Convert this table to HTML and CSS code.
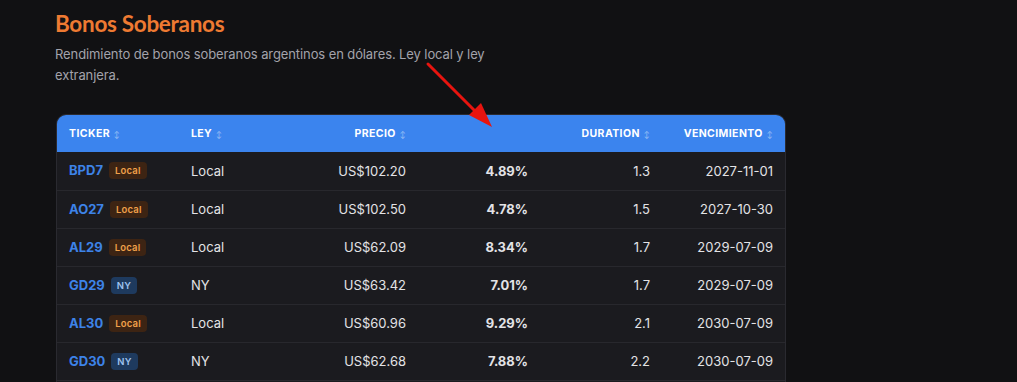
FILE: index.html
```html
<!DOCTYPE html>
<html lang="es">
<head>
<meta charset="utf-8">
<title>Bonos Soberanos</title>
<link rel="stylesheet" href="styles.css">
</head>
<body>
<main class="page">
  <header class="intro">
    <h1 class="title">Bonos Soberanos</h1>
    <p class="subtitle">Rendimiento de bonos soberanos argentinos en dólares. Ley local y ley extranjera.</p>
  </header>
  <div class="table-card">
    <table class="bonds">
      <colgroup>
        <col class="c1"><col class="c2"><col class="c3"><col class="c4"><col class="c5"><col class="c6">
      </colgroup>
      <thead>
        <tr>
          <th class="left">Ticker <span class="sort">↕</span></th>
          <th class="left">Ley <span class="sort">↕</span></th>
          <th class="right">Precio <span class="sort">↕</span></th>
          <th class="right"></th>
          <th class="right">Duration <span class="sort">↕</span></th>
          <th class="right">Vencimiento <span class="sort">↕</span></th>
        </tr>
      </thead>
      <tbody>
        <tr>
          <td><span class="ticker">BPD7</span><span class="badge local">Local</span></td>
          <td>Local</td><td class="right">US$102.20</td><td class="right yield">4.89%</td><td class="right">1.3</td><td class="right">2027-11-01</td>
        </tr>
        <tr>
          <td><span class="ticker">AO27</span><span class="badge local">Local</span></td>
          <td>Local</td><td class="right">US$102.50</td><td class="right yield">4.78%</td><td class="right">1.5</td><td class="right">2027-10-30</td>
        </tr>
        <tr>
          <td><span class="ticker">AL29</span><span class="badge local">Local</span></td>
          <td>Local</td><td class="right">US$62.09</td><td class="right yield">8.34%</td><td class="right">1.7</td><td class="right">2029-07-09</td>
        </tr>
        <tr>
          <td><span class="ticker">GD29</span><span class="badge ny">NY</span></td>
          <td>NY</td><td class="right">US$63.42</td><td class="right yield">7.01%</td><td class="right">1.7</td><td class="right">2029-07-09</td>
        </tr>
        <tr>
          <td><span class="ticker">AL30</span><span class="badge local">Local</span></td>
          <td>Local</td><td class="right">US$60.96</td><td class="right yield">9.29%</td><td class="right">2.1</td><td class="right">2030-07-09</td>
        </tr>
        <tr>
          <td><span class="ticker">GD30</span><span class="badge ny">NY</span></td>
          <td>NY</td><td class="right">US$62.68</td><td class="right yield">7.88%</td><td class="right">2.2</td><td class="right">2030-07-09</td>
        </tr>
      </tbody>
    </table>
  </div>
</main>
<svg class="annotation" width="1017" height="382" viewBox="0 0 1017 382" aria-hidden="true">
  <line x1="428" y1="64" x2="478" y2="114" stroke="#e8140f" stroke-width="3" stroke-linecap="round"/>
  <polygon points="492,127 469,115 481,103" fill="#e8140f"/>
</svg>
</body>
</html>
```

FILE: styles.css
```css
* { box-sizing: border-box; }
html, body { margin: 0; padding: 0; }
body {
  background: #111113;
  color: #e6e6e9;
  font-family: Inter, "Noto Sans", sans-serif;
  width: 1017px;
  height: 382px;
  overflow: hidden;
  position: relative;
}
.page {
  padding: 8px 0 0 55px;
}
.intro { width: 470px; }
.title {
  margin: 0;
  font-family: Lato, Roboto, sans-serif;
  font-size: 22.5px;
  line-height: 32px;
  font-weight: 700;
  letter-spacing: -0.3px;
  color: #ee7a32;
}
.subtitle {
  margin: 4px 0 0;
  font-size: 13px;
  line-height: 21px;
  letter-spacing: -0.1px;
  color: #a3a3ab;
}
.table-card {
  margin-top: 28px;
  margin-left: 1px;
  width: 730px;
  border: 1px solid #2a2a30;
  border-radius: 10px;
  overflow: hidden;
  background: #1b1b1f;
  padding-bottom: 30px;
}
.bonds {
  width: 100%;
  border-collapse: collapse;
  table-layout: fixed;
}
.c1 { width: 122px; }
.c2 { width: 122px; }
.c3 { width: 117px; }
.c4 { width: 122px; }
.c5 { width: 122px; }
.c6 { width: 123px; }
.bonds thead tr { background: #3b84ee; }
.bonds th {
  height: 37px;
  padding: 0 12px;
  font-size: 10.5px;
  font-weight: 700;
  letter-spacing: 0.4px;
  text-transform: uppercase;
  color: #ffffff;
  white-space: nowrap;
}
.sort {
  font-size: 7px;
  font-weight: 400;
  color: rgba(255,255,255,0.5);
  margin-left: 1px;
}
.bonds td {
  height: 38px;
  padding: 0 12px;
  font-size: 13px;
  color: #e3e3e6;
  border-top: 1px solid #28282d;
  white-space: nowrap;
}
.bonds tbody tr:first-child td { border-top: none; }
.bonds tbody tr:last-child td { border-bottom: 1px solid #28282d; }
.left { text-align: left; }
.right { text-align: right; }
.yield { font-weight: 700; color: #f2f2f4; }
.ticker {
  font-weight: 700;
  color: #3d83e8;
}
.badge {
  display: inline-block;
  margin-left: 6px;
  padding: 0 6px;
  height: 17px;
  line-height: 17px;
  border-radius: 4px;
  font-size: 9.5px;
  font-weight: 600;
  letter-spacing: 0.2px;
  vertical-align: 1px;
}
.badge.local { background: #3d2413; color: #f0a04a; }
.badge.ny { background: #1e3a5e; color: #9ec2ee; }
.annotation {
  position: absolute;
  left: 0;
  top: 0;
  pointer-events: none;
}
```
